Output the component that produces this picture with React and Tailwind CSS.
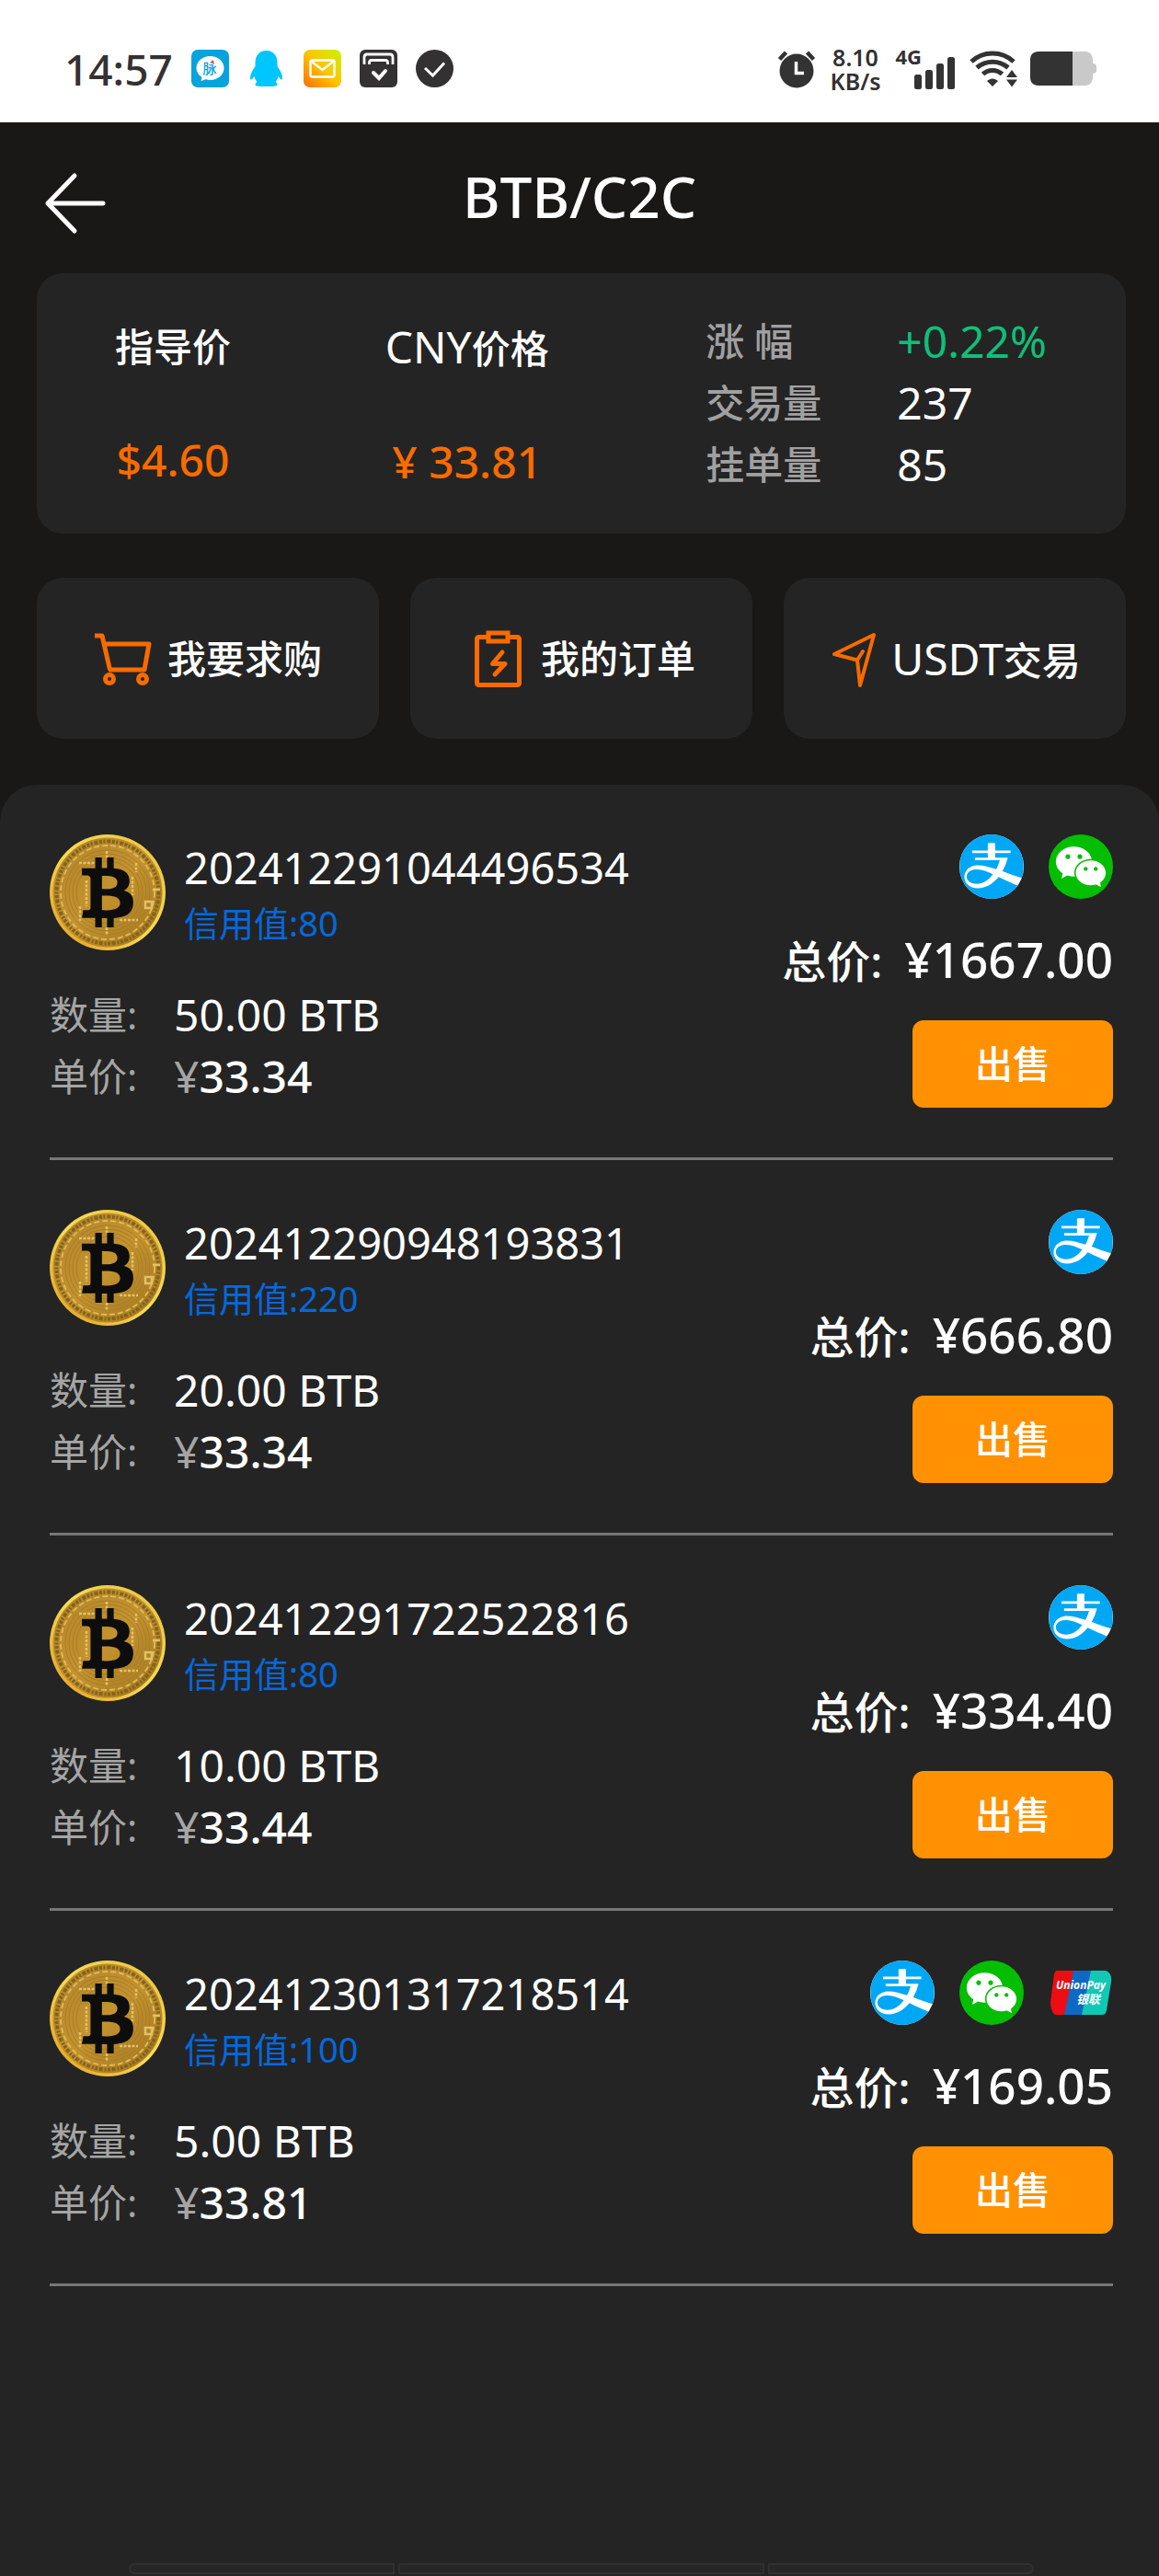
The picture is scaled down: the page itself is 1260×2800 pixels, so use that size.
import { FaBtc } from 'react-icons/fa'
import { AiFillWechat } from 'react-icons/ai'
import { SiAlipay } from 'react-icons/si'

const ORDERS = [
  { id: '202412291044496534', credit: 80, amount: '50.00', price: '33.34', total: '1667.00', pay: ['alipay', 'wechat'] },
  { id: '202412290948193831', credit: 220, amount: '20.00', price: '33.34', total: '666.80', pay: ['alipay'] },
  { id: '202412291722522816', credit: 80, amount: '10.00', price: '33.44', total: '334.40', pay: ['alipay'] },
  { id: '202412301317218514', credit: 100, amount: '5.00', price: '33.81', total: '169.05', pay: ['alipay', 'wechat', 'unionpay'] },
]

function StatusBar() {
  return (
    <div className="flex h-[133px] items-center justify-between bg-white pt-4 pr-[68px] pl-[70px] text-[#333132]">
      <div className="flex items-center gap-5">
        <span className="text-[46px] leading-none font-medium">14:57</span>
        <svg className="h-[41px] w-[41px]" viewBox="0 0 41 41" aria-hidden="true">
          <rect width="41" height="41" rx="7" fill="#08a3dd" />
          <path d="M20.500 7c8.500 0 15 5.800 15 13s-6.500 13-15 13c-2 0-3.500-.2-5-.8L10.500 34l1-4C7.800 27.700 5.500 24.300 5.500 20c0-7.200 6.500-13 15-13z" fill="#fff" />
          <text x="20" y="26" textAnchor="middle" fontSize="15" fontWeight="500" fill="#08a3dd">脉</text>
          <circle cx="23" cy="13" r="1.500" fill="#f04a4a" />
        </svg>
        <svg className="h-[41px] w-[41px]" viewBox="0 0 41 41" aria-hidden="true">
          <path
            d="M20.500 1C12.500 1 8.500 7 8.500 14v4C5.500 22 3 27 3 31c0 2 1 2 2 1l2.500-3c.5 2.500 1.500 4.500 3 6-1.500.8-2 2-2 3 0 1.500 2 2 12 2s12-.5 12-2c0-1-.5-2.200-2-3 1.500-1.500 2.500-3.500 3-6L36 32c1 1 2 1 2-1 0-4-2.500-9-5.500-13v-4c0-7-4-13-12-13z"
            fill="#00c6ff"
          />
        </svg>
        <svg className="h-[41px] w-[41px]" viewBox="0 0 41 41" aria-hidden="true">
          <defs>
            <linearGradient id="mail" x1="0" y1="1" x2="1" y2="0">
              <stop offset="0" stopColor="#ff6a00" />
              <stop offset=".5" stopColor="#ffc400" />
              <stop offset="1" stopColor="#c6f500" />
            </linearGradient>
          </defs>
          <rect width="41" height="41" rx="7" fill="url(#mail)" />
          <rect x="7.500" y="11.500" width="26" height="18" rx="2" fill="none" stroke="#fff" strokeWidth="2.400" />
          <path d="M9 13l11.500 9L32 13" fill="none" stroke="#fff" strokeWidth="2.400" />
        </svg>
        <svg className="h-[41px] w-[41px]" viewBox="0 0 41 41" aria-hidden="true">
          <rect width="41" height="41" rx="6" fill="#333132" />
          <path d="M5 16V8.500C5 6 6 5 8 5h25c2 0 3 1 3 3.500V16M10.500 16v-2c0-1.500.8-2.500 2.500-2.500h15c1.700 0 2.500 1 2.500 2.500v2" fill="none" stroke="#fff" strokeWidth="2.800" />
          <path d="M15 25l6 6 7-8" fill="none" stroke="#fff" strokeWidth="4" strokeLinecap="round" />
        </svg>
        <svg className="h-[41px] w-[41px]" viewBox="0 0 41 41" aria-hidden="true">
          <circle cx="20.500" cy="20.500" r="20.500" fill="#333132" />
          <path d="M10 20l8.500 8L31 14.500" fill="none" stroke="#fff" strokeWidth="3" />
        </svg>
      </div>

      <div className="flex items-center gap-4">
        <svg className="h-[42px] w-[42px]" viewBox="0 0 42 42" aria-hidden="true">
          <circle cx="21" cy="23" r="18.500" fill="#333" />
          <path d="M2.500 10.500l7-7.500M39.500 10.500l-7-7.500" stroke="#333" strokeWidth="4.500" />
          <path d="M20.500 13v12.500h8.500" fill="none" stroke="#fff" strokeWidth="3.500" />
        </svg>
        <span className="flex flex-col items-center text-[25px] leading-[26px] font-semibold">
          <span>8.10</span>
          <span>KB/s</span>
        </span>
        <div className="flex h-[44px]">
          <span className="text-[22px] leading-4 font-bold">4G</span>
          <svg className="-ml-2 h-[44px] w-[44px]" viewBox="0 0 44 44" fill="#333" aria-hidden="true">
            <rect x="0" y="28" width="8" height="16" rx="2.500" />
            <rect x="12" y="23" width="8" height="21" rx="2.500" />
            <rect x="24" y="16" width="8" height="28" rx="2.500" />
            <rect x="36" y="9" width="8" height="35" rx="2.500" />
          </svg>
        </div>
        <svg className="h-[40px] w-[54px]" viewBox="0 0 54 40" fill="none" aria-hidden="true">
          <path d="M2 12c13-12 33-12 46 0M8 18.500c10-8.500 24-8.500 34 0M14.500 25.500c6-5.500 15-5.500 21 0" stroke="#333" strokeWidth="5" />
          <path d="M19 33c4-3.500 8-3.500 12 0l-6 6z" fill="#333" />
          <path d="M46 18l9 12H37z" fill="#fff" />
          <path d="M46 21l6 8H40zM40 31.500h12l-6 8z" fill="#333" />
        </svg>
        <svg className="-ml-1 h-[37px] w-[72px]" viewBox="0 0 72 37" aria-hidden="true">
          <path d="M9 0h51c5 0 8 4 8 9v4c3 0 4 1.500 4 3.500v4c0 2-1 3.500-4 3.500v4c0 5-3 9-8 9H9z" fill="#c9c9c9" />
          <path d="M46 0v37H9c-6 0-9-3.500-9-9V9c0-5.500 3-9 9-9z" fill="#333" />
        </svg>
      </div>
    </div>
  )
}

function CartIcon() {
  return (
    <svg className="h-16 w-16" viewBox="0 0 64 64" fill="none" stroke="#f76b00" strokeWidth="5" aria-hidden="true">
      <path d="M1 7h8l8.500 37M11 16h49l-5 28H16" strokeLinejoin="round" />
      <circle cx="17" cy="54" r="4.500" />
      <circle cx="53" cy="54" r="4.500" />
    </svg>
  )
}

function OrderIcon() {
  return (
    <svg className="h-16 w-16" viewBox="0 0 64 64" fill="none" stroke="#f76b00" strokeWidth="5" aria-hidden="true">
      <path d="M22 8.500H12.500a2 2 0 0 0-2 2v48a2 2 0 0 0 2 2h42a2 2 0 0 0 2-2v-48a2 2 0 0 0-2-2H45" />
      <rect x="23" y="4" width="21" height="9" />
      <path d="M38 25L27.500 37.500H41L30 49" strokeLinecap="round" strokeLinejoin="round" />
    </svg>
  )
}

function SendIcon() {
  return (
    <svg className="h-16 w-16" viewBox="0 0 64 64" fill="none" stroke="#f76b00" strokeWidth="4" strokeLinejoin="round" aria-hidden="true">
      <path d="M53 6L10 27l25 6.500L38 61z" />
      <path d="M35 33.500l6-9.500" strokeLinecap="round" />
    </svg>
  )
}

function Coin() {
  return (
    <div className="relative h-[126px] w-[126px] shrink-0">
      <svg className="h-full w-full" viewBox="0 0 126 126" fill="none" aria-hidden="true">
        <defs>
          <linearGradient id="rim" x1="0" y1="1" x2="1" y2="0">
            <stop offset="0" stopColor="#e39a1d" />
            <stop offset=".5" stopColor="#f7dc57" />
            <stop offset="1" stopColor="#e9c23c" />
          </linearGradient>
          <linearGradient id="face" x1="0" y1="0" x2="1" y2="1">
            <stop offset="0" stopColor="#b0842a" />
            <stop offset=".5" stopColor="#c4932f" />
            <stop offset="1" stopColor="#a0751d" />
          </linearGradient>
        </defs>
        <circle cx="63" cy="63" r="63" fill="url(#rim)" />
        <circle cx="63" cy="63" r="59.500" fill="url(#face)" />
        <circle cx="63" cy="63" r="55.500" stroke="#86631c" strokeWidth="4" strokeDasharray="3 1.500 2 2 4 1.500" />
        <circle cx="63" cy="63" r="51" stroke="#e0bb5c" strokeWidth="1.800" strokeDasharray="6 3" />
        <g stroke="#a97d28" strokeWidth="1">
          <circle cx="63" cy="63" r="46" />
          <circle cx="63" cy="63" r="42" />
          <circle cx="63" cy="63" r="38" />
          <circle cx="63" cy="63" r="34" />
        </g>
        <g stroke="#e3c266" strokeWidth="2.500" strokeDasharray="3 1.500">
          <path d="M32 31h20M33 78v16M40 50v28M94 31v10M90 46v20M76 93h20M62 18v8M62 101v8" />
          <path d="M104 73h7v7h-7zM112 60h8" strokeDasharray="none" />
        </g>
      </svg>
      <FaBtc className="absolute inset-0 m-auto h-[76px] w-[76px] text-[#0d0d0d]" aria-hidden="true" />
    </div>
  )
}

function PayIcon({ type }) {
  if (type === 'alipay') {
    return (
      <span className="flex h-[70px] w-[70px] overflow-hidden rounded-full bg-white">
        <SiAlipay className="h-[70px] w-[70px] text-[#00a7f5]" aria-label="支付宝" />
      </span>
    )
  }
  if (type === 'wechat') {
    return (
      <span className="flex h-[70px] w-[70px] items-center justify-center rounded-full bg-[#04be02]">
        <AiFillWechat className="h-[62px] w-[62px] text-white" aria-label="微信" />
      </span>
    )
  }
  return (
    <svg className="h-[70px] w-[70px]" viewBox="0 0 70 70" role="img" aria-label="银联">
      <path d="M9 11h20L18 59H8c-3 0-6-7-6-14l4-30c.5-2 1.500-4 3-4z" fill="#ee0d12" />
      <path d="M27 11h24l-9 48H17z" fill="#0d68c6" />
      <path d="M46 11h15c5 0 8 6 7 12l-5 31c-.5 3-2 5-5 5H36z" fill="#10c9b5" />
      <text x="35" y="31" textAnchor="middle" fontSize="12" fontWeight="700" fontStyle="italic" fill="#fff">UnionPay</text>
      <text x="43" y="47" textAnchor="middle" fontSize="13" fontWeight="700" fontStyle="italic" fill="#fff">银联</text>
    </svg>
  )
}

function OrderRow({ order }) {
  return (
    <li className="flex justify-between border-b-3 border-[#777] py-[54px]">
      <div>
        <div className="flex items-end gap-5">
          <Coin />
          <div className="leading-[60px]">
            <p className="text-[47px]">{order.id}</p>
            <p className="text-[38px] text-[#0668dc]">信用值:{order.credit}</p>
          </div>
        </div>
        <dl className="mt-9 grid grid-cols-[135px_auto] text-[48px] leading-[67px]">
          <dt className="text-[42px] text-[#a5a5a5]">数量:</dt>
          <dd>{order.amount} BTB</dd>
          <dt className="text-[42px] text-[#a5a5a5]">单价:</dt>
          <dd className="font-medium">
            <span className="font-normal text-[#a5a5a5]">¥</span>
            {order.price}
          </dd>
        </dl>
      </div>

      <div className="flex flex-col items-end">
        <div className="flex gap-[27px]">
          {order.pay.map((type) => (
            <PayIcon key={type} type={type} />
          ))}
        </div>
        <p className="mt-9 mb-[34px] flex items-baseline gap-6 leading-[60px] font-medium">
          <span className="text-[48px]">总价:</span>
          <span className="text-[53px]">¥{order.total}</span>
        </p>
        <button type="button" className="h-[95px] w-[218px] rounded-xl bg-[#ff9103] text-[41px] font-medium">
          出售
        </button>
      </div>
    </li>
  )
}

export default function App() {
  return (
    <div className="flex min-h-screen flex-col bg-[#191816] font-['Noto_Sans','Noto_Sans_CJK_SC',sans-serif] text-white">
      <StatusBar />

      <header className="grid h-[164px] grid-cols-[1fr_auto_1fr] items-center px-12">
        <button type="button" aria-label="返回" className="mt-3 justify-self-start">
          <svg className="h-[68px] w-[68px]" viewBox="0 0 68 68" fill="none" stroke="#fff" strokeWidth="5" strokeLinecap="round" strokeLinejoin="round">
            <path d="M33 4L4 34l29 30M4 34h60" />
          </svg>
        </button>
        <h1 className="pb-1 text-[62px] leading-none font-medium">BTB/C2C</h1>
      </header>

      <main className="flex flex-1 flex-col">
        <section className="mr-9 ml-10 grid grid-cols-[25fr_29fr_46fr] rounded-[28px] bg-[#242424] pt-10 pb-[42px] leading-[67px]">
          <div className="flex flex-col items-center gap-14 pt-1.5">
            <p className="text-[42px] font-medium">指导价</p>
            <p className="text-[48px] font-medium text-[#f76b00]">$4.60</p>
          </div>
          <div className="flex flex-col items-center gap-14 pt-1.5">
            <p className="text-[48px]">
              CNY<span className="text-[42px] font-medium">价格</span>
            </p>
            <p className="text-[48px] font-medium text-[#f76b00]">¥ 33.81</p>
          </div>
          <dl className="grid grid-cols-[208px_auto] pl-[88px] text-[48px]">
            <dt className="text-[42px] font-medium text-[#a0a0a0]">涨 幅</dt>
            <dd className="text-[#0fbf7a]">+0.22%</dd>
            <dt className="text-[42px] font-medium text-[#a0a0a0]">交易量</dt>
            <dd>237</dd>
            <dt className="text-[42px] font-medium text-[#a0a0a0]">挂单量</dt>
            <dd>85</dd>
          </dl>
        </section>

        <nav className="mt-12 mr-9 ml-10 grid grid-cols-3 gap-[34px] text-[42px] font-medium">
          <button type="button" className="flex h-[175px] items-center justify-center gap-4 rounded-[28px] bg-[#242424]">
            <CartIcon />
            我要求购
          </button>
          <button type="button" className="flex h-[175px] items-center justify-center gap-4 rounded-[28px] bg-[#242424]">
            <OrderIcon />
            我的订单
          </button>
          <button type="button" className="flex h-[175px] items-center justify-center gap-2 rounded-[28px] bg-[#242424] pr-1">
            <SendIcon />
            <span>
              <span className="text-[48px] font-normal">USDT</span>交易
            </span>
          </button>
        </nav>

        <section className="mt-[50px] flex flex-1 flex-col rounded-t-[40px] bg-[#242424] pr-[50px] pl-[54px]">
          <ul>
            {ORDERS.map((order) => (
              <OrderRow key={order.id} order={order} />
            ))}
          </ul>
          <div className="mx-[86px] mt-auto flex h-[14px] gap-1" aria-hidden="true">
            <span className="h-3 flex-[29] rounded-l-md border-2 border-[#303030] bg-[#272727]" />
            <span className="h-3 flex-[40] border-2 border-[#303030] bg-[#272727]" />
            <span className="h-3 flex-[29] rounded-r-md border-2 border-[#303030] bg-[#272727]" />
          </div>
        </section>
      </main>
    </div>
  )
}
